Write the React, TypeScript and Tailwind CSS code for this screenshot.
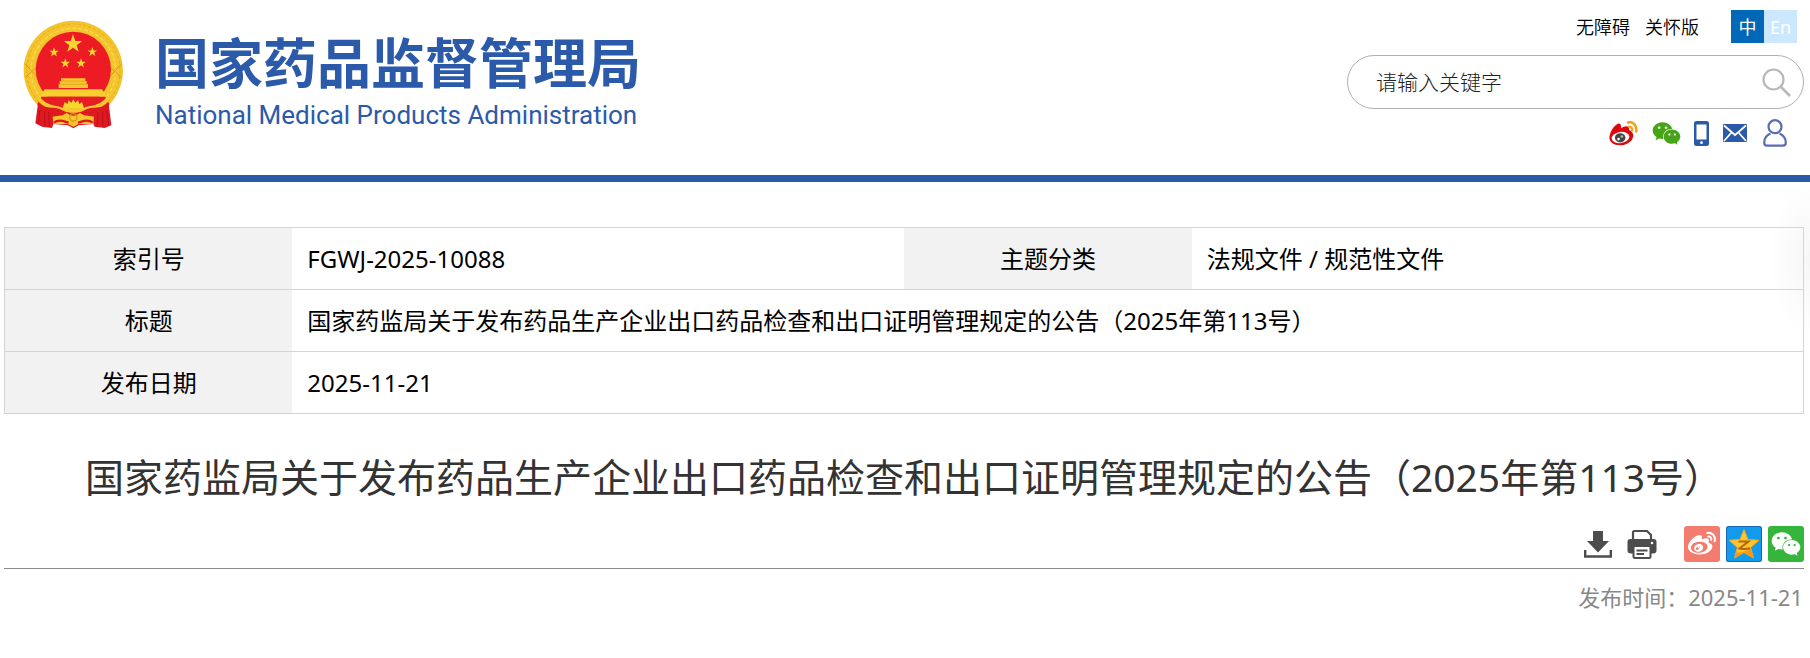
import type { ReactNode } from "react";
import { FaWeibo, FaWeixin } from "react-icons/fa";

const TITLE = "国家药监局关于发布药品生产企业出口药品检查和出口证明管理规定的公告（2025年第113号）";

const STAR = "M0-10 2.4-3.2 9.5-3.1 3.8 1.2 5.9 8.1 0 4-5.9 8.1-3.8 1.2-9.5-3.1-2.4-3.2Z";

function Emblem() {
  return (
    <svg viewBox="69 60 300 330" className="h-[110px] w-[100px] shrink-0" aria-hidden>
      <path
        d="M220 62C302 62 369 128 369 212C369 250 352 290 327 315L300 372H140L113 315C88 290 71 250 71 212C71 128 138 62 220 62Z"
        fill="#f3c42b"
      />
      <circle cx="220" cy="212" r="140" fill="none" stroke="#e2ab25" strokeWidth="3" strokeDasharray="9 7" />
      <circle cx="220" cy="212" r="127" fill="none" stroke="#f8dc4c" strokeWidth="4" strokeDasharray="12 6" />
      <path d="M76 232 122 190M364 232 318 190M74 190 120 240M366 190 320 240" stroke="#d99a1c" strokeWidth="3" />
      <circle cx="220" cy="208" r="113" fill="#ed1c24" />
      <g fill="#f8d62e">
        <path d={STAR} transform="translate(219 132) scale(2.9)" />
        <path d={STAR} transform="translate(162 157) scale(1.5)" />
        <path d={STAR} transform="translate(277 156) scale(1.5)" />
        <path d={STAR} transform="translate(196 190) scale(1.5)" />
        <path d={STAR} transform="translate(243 190) scale(1.5)" />
      </g>
      <path d="M183 235H256V243H260V252H264V264H176V252H179V243H183Z" fill="#f5c72c" />
      <path d="M183 243H256M178 253H262" stroke="#d99a1c" strokeWidth="2" />
      <path d="M134 268H306L320 290H120Z" fill="#f7cf30" />
      <path d="M124 290H316L328 312 320 330H120L112 312Z" fill="#e81c24" />
      <path
        d="M120 290C140 320 170 314 190 324H250C270 314 300 320 320 290L326 304C300 332 270 326 250 338H190C170 326 140 332 114 304Z"
        fill="#f5c72c"
      />
      <path
        d="M188 324 194 306 202 312 206 301 214 308 220 298 226 308 234 301 238 312 246 306 252 324Z"
        fill="#f8d62e"
      />
      <path
        d="M114 310C134 330 160 316 190 332C205 340 235 340 250 332C280 316 306 330 326 310L334 376 314 384 284 380 280 372 236 376 220 385 204 376 160 372 156 384 126 380 106 370Z"
        fill="#e01820"
      />
      <path
        d="M120 330 114 372M134 334V378M146 336 148 380M320 330 326 374M308 334V380M294 336 292 380"
        stroke="#b9121b"
        strokeWidth="3"
      />
      <path
        d="M158 350C178 346 190 348 200 338C212 350 228 350 240 338C250 348 262 346 282 350L280 372H236L220 380 204 372H160Z"
        fill="#f5c72c"
      />
      <path d="M162 368C178 354 195 366 206 368M278 368C262 354 245 366 234 368" fill="none" stroke="#e01820" strokeWidth="7" />
      <circle cx="220" cy="352" r="11" fill="none" stroke="#d99a1c" strokeWidth="4" />
    </svg>
  );
}

function WeiboColorIcon() {
  return (
    <svg viewBox="0 0 88 76" className="h-[25px] w-[29px]" aria-hidden>
      <path
        d="M24 10C31 4 39 10 36 22C48 14 62 12 61 27C74 32 77 45 70 56C60 70 44 75 26 73C8 71-2 58 2 44C5 31 12 18 24 10Z"
        fill="#e0070c"
      />
      <ellipse cx="35" cy="50" rx="27" ry="17" fill="#fff" transform="rotate(-8 35 50)" />
      <ellipse cx="34" cy="51" rx="16" ry="14" fill="#4a4446" />
      <circle cx="29" cy="55" r="4" fill="#fff" />
      <circle cx="39" cy="47" r="4" fill="#b8b4b5" />
      <path d="M55 6C72-2 87 14 82 35" fill="none" stroke="#eda51c" strokeWidth="8" />
      <path d="M57 18C66 15 73 22 70 32" fill="none" stroke="#eda51c" strokeWidth="7" />
    </svg>
  );
}

function PhoneIcon() {
  return (
    <svg viewBox="0 0 15 25" className="h-[25px] w-[15px]" aria-hidden>
      <rect width="15" height="25" rx="2.5" fill="#2b5aab" />
      <rect x="2.5" y="3.5" width="10" height="15" fill="#fff" />
      <circle cx="7.5" cy="21.7" r="1.4" fill="#fff" />
    </svg>
  );
}

function MailIcon() {
  return (
    <svg viewBox="0 0 24 18" className="h-[18px] w-6" aria-hidden>
      <rect width="24" height="18" rx="1" fill="#2b5aab" />
      <path d="M1 1.5 12 11 23 1.5M1 17 8.5 8.5M23 17 15.5 8.5" fill="none" stroke="#fff" strokeWidth="1.8" />
    </svg>
  );
}

function UserIcon() {
  return (
    <svg viewBox="0 0 24 28" className="h-7 w-6" fill="none" stroke="#5a6db4" strokeWidth="2.2" aria-hidden>
      <circle cx="12" cy="7.7" r="6.5" />
      <path d="M7.5 14.5C3.5 16.2 1.2 19.5 1.2 23.5C1.2 25.8 2 26.7 4 26.7H20C22 26.7 22.8 25.8 22.8 23.5C22.8 19.5 20.5 16.2 16.5 14.5" />
    </svg>
  );
}

function DownloadIcon() {
  return (
    <svg viewBox="0 0 28 28" className="size-7" aria-hidden>
      <path d="M9 1H19V11H25L14 22.5 3 11H9Z" fill="#4d4d4d" />
      <path d="M1.2 20V26.5H26.8V20" fill="none" stroke="#4d4d4d" strokeWidth="2.4" />
    </svg>
  );
}

function PrinterIcon() {
  return (
    <svg viewBox="0 0 30 30" className="size-[30px]" aria-hidden>
      <path d="M6 11V3.5Q6 2 7.5 2H20L24 6V11" fill="#fff" stroke="#4d4d4d" strokeWidth="2.2" />
      <path d="M3.5 10H26.5Q29.5 10 29.5 13V21.5Q29.5 24.5 26 24.5H4Q.5 24.5.5 21.5V13Q.5 10 3.5 10Z" fill="#4d4d4d" />
      <circle cx="25" cy="14" r="1.3" fill="#fff" />
      <rect x="6.5" y="17" width="17" height="12" rx="1.5" fill="#fff" stroke="#4d4d4d" strokeWidth="2" />
      <path d="M9.5 21.5H20.5M9.5 25H17" stroke="#4d4d4d" strokeWidth="1.8" />
    </svg>
  );
}

function QzoneIcon() {
  return (
    <svg viewBox="0 0 36 36" className="size-9" aria-hidden>
      <rect width="36" height="36" rx="2.5" fill="#1768b8" />
      <rect x="1" y="1" width="34" height="34" rx="2" fill="#129bec" />
      <path
        d="M18 3.5 22 13.5 33 14.3 24.7 21.5 27.5 32 18 26.5 8.5 32 11.3 21.5 3 14.3 14 13.5Z"
        fill="#fdc62c"
        stroke="#f6a51c"
        strokeWidth="1"
      />
      <path d="M24.7 21.5 27.5 32 18 26.5 8.5 32 10 26.5C16 27 21 25.5 24.7 21.5Z" fill="#f49a18" />
      <path d="M12.5 15.5H22.5L13.5 22.5C17 23.3 21 23.2 24 22.3" fill="none" stroke="#b5650c" strokeWidth="2" />
    </svg>
  );
}

const SOCIAL: ReadonlyArray<{ label: string; icon: ReactNode; className: string }> = [
  { label: "微博", icon: <WeiboColorIcon />, className: "mr-3.5" },
  { label: "微信", icon: <FaWeixin className="size-[29px] text-[#46a516]" />, className: "mr-[13px]" },
  { label: "手机版", icon: <PhoneIcon />, className: "mr-3.5" },
  { label: "邮箱", icon: <MailIcon />, className: "mr-4" },
  { label: "个人中心", icon: <UserIcon />, className: "" },
];

function Header() {
  return (
    <header className="flex justify-between border-b-[7px] border-[#2b5aab] pr-1.5 pl-[23px]">
      <a href="#" className="flex items-start pt-5 text-[#2b5aab]">
        <Emblem />
        <span className="ml-8 flex flex-col pt-[15px]">
          <span className="text-[54px] leading-[56px] font-bold whitespace-nowrap">国家药品监督管理局</span>
          <span className="pt-2 font-['Roboto','Noto_Sans',sans-serif] text-[26px] leading-8 whitespace-nowrap">
            National Medical Products Administration
          </span>
        </span>
      </a>

      <div className="flex w-[457px] flex-col items-end pt-2.5 pb-7">
        <div className="mr-[7px] flex h-[33px] items-center text-lg leading-6">
          <a href="#" className="font-[350]">无障碍</a>
          <a href="#" className="ml-[15px] font-[350]">关怀版</a>
          <a href="#" className="ml-8 flex size-[33px] items-center justify-center bg-[#0068b7] text-white">中</a>
          <a href="#" className="flex size-[33px] items-center justify-center bg-[#cce8ff] text-white">En</a>
        </div>
        <form
          className="mt-3 flex h-[54px] w-full items-center rounded-full border border-[#b0b0b0] pr-3 pl-7"
          onSubmit={(e) => e.preventDefault()}
        >
          <input
            type="text"
            aria-label="请输入关键字"
            placeholder="请输入关键字"
            className="min-w-0 flex-1 bg-transparent text-[21px] leading-7 font-light outline-none placeholder:text-[#222222]"
          />
          <button type="submit" aria-label="搜索">
            <svg viewBox="0 0 29 29" className="size-[29px]" fill="none" stroke="#b8b8b8" strokeWidth="2.2" aria-hidden>
              <circle cx="11.5" cy="11.5" r="10" />
              <path d="M18.5 18.5 28 28" strokeWidth="2.6" />
            </svg>
          </button>
        </form>
        <div className="mt-2.5 mr-[17px] flex h-7 items-center">
          {SOCIAL.map(({ label, icon, className }) => (
            <a key={label} href="#" aria-label={label} className={className}>
              {icon}
            </a>
          ))}
        </div>
      </div>
    </header>
  );
}

function InfoTable() {
  const row = "h-[62px] border border-[#d4d4d4]";
  const label = "bg-[#f2f2f2] text-center font-normal";
  const value = "pl-[15px] text-left";
  return (
    <table className="w-full table-fixed border-collapse text-2xl leading-8">
      <colgroup>
        <col className="w-[16%]" />
        <col className="w-[34%]" />
        <col className="w-[16%]" />
        <col className="w-[34%]" />
      </colgroup>
      <tbody>
        <tr className={row}>
          <th scope="row" className={label}>索引号</th>
          <td className={value}>FGWJ-2025-10088</td>
          <th scope="row" className={label}>主题分类</th>
          <td className={value}>法规文件 / 规范性文件</td>
        </tr>
        <tr className={row}>
          <th scope="row" className={label}>标题</th>
          <td className={value} colSpan={3}>{TITLE}</td>
        </tr>
        <tr className={row}>
          <th scope="row" className={label}>发布日期</th>
          <td className={value} colSpan={3}>2025-11-21</td>
        </tr>
      </tbody>
    </table>
  );
}

function ArticleTools() {
  return (
    <div className="flex items-center justify-end border-b border-[#8c8c8c] pb-1.5">
      <button type="button" aria-label="下载" className="mr-[15px]">
        <DownloadIcon />
      </button>
      <button type="button" aria-label="打印" className="mr-[27px]">
        <PrinterIcon />
      </button>
      <div className="flex gap-1.5">
        <a href="#" aria-label="分享到微博" className="flex size-9 items-center justify-center rounded-[3px] bg-[#f27c6e] text-white">
          <FaWeibo className="size-7" />
        </a>
        <a href="#" aria-label="分享到QQ空间">
          <QzoneIcon />
        </a>
        <a href="#" aria-label="分享到微信" className="flex size-9 items-center justify-center rounded-[3px] bg-[#36b53c] text-white">
          <FaWeixin className="size-[30px]" />
        </a>
      </div>
    </div>
  );
}

export default function App() {
  return (
    <div className="bg-white font-['Noto_Sans','Noto_Sans_CJK_SC',sans-serif] text-black">
      <Header />
      <main className="bg-[radial-gradient(ellipse_40px_80px_at_100%_76px,#f6f6f6,#ffffff)] pt-[45px] pr-1.5 pb-10 pl-1">
        <InfoTable />
        <h1 className="pt-[35px] text-center text-[39px] leading-[56px] whitespace-nowrap text-[#333333]">
          {TITLE}
        </h1>
        <div className="pt-[21px]">
          <ArticleTools />
        </div>
        <p className="pt-3 pr-px text-right text-[22px] leading-8 text-[#888888]">发布时间：2025-11-21</p>
      </main>
    </div>
  );
}
